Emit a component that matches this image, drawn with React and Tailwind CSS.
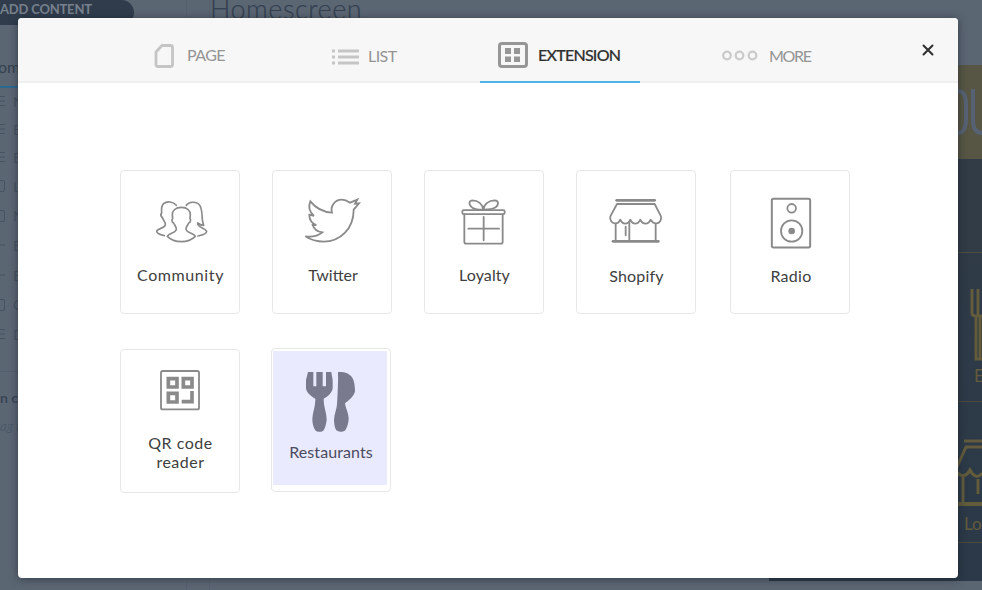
import React from "react";

const line = { fill: "none", stroke: "#8a8a8a", strokeWidth: 5.4, strokeLinejoin: "round", strokeLinecap: "round" };

function CommunityIcon() {
  return (
    <svg className="h-[70px] w-[60px]" viewBox="120 75 180 210" {...line} strokeWidth="5">
      <path d="M199 136C190 125 171 122 161 131C153 138 154 149 155 158C151 163 153 169 157 173C160 181 168 187 166 195C164 204 142 206 140 214C140 220 154 225 163 227" />
      <path d="M229 136C237 125 257 124 266 132C277 142 276 164 277 179C278 186 280 192 281 196C274 196 268 193 263 189C260 202 286 204 290 214C290 221 275 226 264 228" />
      <path d="M214 142C196 142 187 152 187 164L188 176C184 179 186 187 191 189C194 195 199 201 199 207C199 220 177 217 172 229C184 241 198 245 214 245C230 245 244 241 256 229C251 217 229 220 228 207C228 201 233 195 236 189C242 187 243 179 240 176L241 164C241 152 232 142 214 142Z" />
    </svg>
  );
}

function TwitterIcon() {
  return (
    <svg className="h-[70px] w-[60px]" viewBox="576 75 180 210" {...line}>
      <path strokeLinejoin="miter" d="M601 124C617 144 640 156 666 158C660 139 675 119 695 119C706 119 713 123 720 128L742 119L735 131L747 130L731 149C731 207 690 245 641 245C621 245 601 239 586 229C606 232 622 229 637 217C622 215 612 208 608 195L619 195C606 190 598 179 598 164L612 168C597 154 594 140 601 124Z" />
    </svg>
  );
}

function LoyaltyIcon() {
  return (
    <svg className="h-[70px] w-[60px]" viewBox="132 75 180 210" {...line}>
      <rect x="157" y="150.500" width="127" height="12" rx="4" />
      <path d="M163 163V246Q163 251 168 251H273Q278 251 278 246V163M221 171V241M175 206H267" />
      <path d="M220 149C222 132 237 121 254 121C268 122 266 135 257 142C247 149 231 149 220 149C218 132 204 121 187 121C174 122 177 137 187 143C196 149 209 149 220 149Z" />
    </svg>
  );
}

function ShopifyIcon() {
  return (
    <svg className="h-[70px] w-[60px]" viewBox="588 75 180 210" {...line}>
      <path strokeWidth="8" d="M620 121H734" />
      <path d="M621 132H734L753 169C755 180 749 190 739 190C730 191 725 184 722 179C718 187 714 191 707 191C699 191 694 186 691 179C687 187 682 191 676 191C669 191 664 186 661 179C657 187 652 191 646 191C639 191 634 186 631 179C628 186 623 191 615 190C605 190 599 181 601 169Z" />
      <path d="M617 192V242M737 192V242M658 186V242M647 200V226" />
      <path strokeWidth="8" d="M609 244H745" />
    </svg>
  );
}

function RadioIcon() {
  return (
    <svg className="h-[70px] w-[60px]" viewBox="120 75 180 210" {...line}>
      <rect x="155.500" y="116.500" width="115" height="146" rx="5" strokeWidth="6" />
      <circle cx="215" cy="145" r="13" />
      <circle cx="215" cy="213" r="32" />
      <circle cx="215" cy="213" r="10" fill="#8a8a8a" stroke="none" />
    </svg>
  );
}

function QrIcon() {
  return (
    <svg className="h-[70px] w-[60px]" viewBox="120 72 180 210" fill="none" stroke="#8a8a8a">
      <rect x="153" y="93" width="114" height="115" rx="5" strokeWidth="5.500" />
      <path strokeWidth="11" d="M175 116H201V141H175ZM220 116H246V141H220ZM175 160H201V186H175ZM246 153V185H215" />
    </svg>
  );
}

function RestaurantsIcon() {
  return (
    <svg className="ml-0.5 h-[70px] w-[60px]" viewBox="573 69 180 210" fill="#7a7a8f">
      <path d="M594 96H610V139H619V96H638V139H648V96H664L668 120V144C667 158 654 169 641 176C641 203 650 216 650 240C649 251 645 264 641 271C636 277 621 277 616 271C611 263 607 250 607 239C608 214 616 203 616 176C602 168 589 158 588 144V120Z" />
      <path d="M684 96C704 95 719 100 727 113C733 123 735 139 735 154C732 169 718 180 705 190C707 207 715 216 716 235C716 249 711 263 707 269C701 277 685 277 679 271C674 263 672 250 672 239C673 221 680 209 681 193C683 159 685 128 684 96Z" />
    </svg>
  );
}

function Card({ icon, label, className = "", labelClass = "mt-[10px]" }) {
  return (
    <div className={`h-36 w-[120px] shrink-0 rounded-[4px] border border-[#e7e7e7] bg-white ${className}`}>
      <div className="flex flex-col items-center pt-[14px]">
        {icon}
        <span className={`whitespace-pre text-center text-[16px] leading-[19px] text-[#404040] ${labelClass}`}>{label}</span>
      </div>
    </div>
  );
}

function ListGlyph() {
  return (
    <svg className="h-3 w-1.5 shrink-0" viewBox="0 0 6 12" stroke="#465363">
      <path d="M0 1.500H5M0 6H5M0 10.500H5" />
    </svg>
  );
}

function BoxGlyph() {
  return (
    <svg className="h-3 w-1.5 shrink-0" viewBox="0 0 6 12" fill="none" stroke="#465363">
      <path d="M0 .5H3Q4.500 .5 4.500 2V10Q4.500 11.500 3 11.500H0" />
    </svg>
  );
}

function DashGlyph() {
  return (
    <svg className="h-3 w-1.5 shrink-0" viewBox="0 0 6 12" stroke="#465363">
      <path d="M0 6H5" />
    </svg>
  );
}

const sidebarItems = [
  [ListGlyph, "N", "h-7"],
  [ListGlyph, "E", "h-7"],
  [ListGlyph, "E", "h-7"],
  [BoxGlyph, "L", "h-[30px]"],
  [BoxGlyph, "N", "h-[29px]"],
  [DashGlyph, "E", "h-[30px]"],
  [DashGlyph, "E", "h-[30px]"],
  [BoxGlyph, "C", "h-[29px]"],
  [ListGlyph, "D", "h-[30px]"],
];

function Sidebar() {
  return (
    <aside className="flex w-[187px] shrink-0 flex-col border-r border-[#566170]">
      <div className="h-[25px] w-[134px] rounded-r-[14px] bg-[#303c4c] pt-px text-[13px] font-bold leading-4 tracking-[-0.015em] text-[#77818d]">
        ADD CONTENT
      </div>
      <div className="mt-[26px] flex h-[37px] w-[120px] items-center border-b-2 border-[#2c6890] pb-1 text-[16px] text-[#35414f]">
        <span className="-ml-0.5">omescreen</span>
      </div>
      <div className="-mt-px text-[14px] text-[#465363]">
        {sidebarItems.map(([Glyph, letter, height], i) => (
          <div key={i} className={`flex items-center gap-[7px] ${height}`}>
            <Glyph />
            <span>{letter}</span>
          </div>
        ))}
      </div>
      <div className="mt-[22px] border-t border-[#536070] pt-4 text-[14px] font-bold leading-5 text-[#394555]">n content</div>
      <div className="mt-[9px] text-[13px] italic text-[#4c5968]">ag items</div>
    </aside>
  );
}

function PhonePreview() {
  return (
    <div className="flex w-[213px] shrink-0 flex-col items-end pb-[9px] pt-[65px]">
      <div className="flex h-[94px] w-full justify-end bg-[#575644] pt-[24px]">
        <svg className="h-12 w-6" viewBox="0 0 24 48" fill="none" stroke="#566273" strokeWidth="4">
          <path d="M0 2C6 2 8 8 8 15V29C8 38 6 44 0 44M15 0V31C15 40 18 44 24 44" />
        </svg>
      </div>
      <div className="flex w-full flex-1 flex-col items-end bg-gradient-to-b from-[#303b46] to-[#2b3948]">
        <div className="h-[94px] w-full border-b border-[#51503f] bg-[#313c46]" />
        <svg className="mt-[36px] h-[72px] w-6" viewBox="0 0 24 72" fill="none" stroke="#625b3c" strokeWidth="3">
          <path d="M14 0V24Q14 27 18 27H24M20 0V27M18 27V70H24M22 28V70" />
        </svg>
        <div className="w-[8px] pt-[5px] text-[17px] leading-5 text-[#625b3c]">E</div>
        <div className="mt-[15px] h-px w-full bg-[#4d4b3e]" />
        <svg className="mt-[37px] h-[68px] w-6" viewBox="0 0 24 68" fill="none" stroke="#625b3c" strokeWidth="3">
          <path d="M6 2H24M24 8H8L-2 30C0 38 8 39 12 31C15 37 20 40 24 34M5 37V64M20 40V55" />
          <path strokeWidth="4" d="M0 65H24" />
        </svg>
        <div className="w-[18px] pt-[5px] text-[17px] leading-6 text-[#625b3c]">Loyalty</div>
        <div className="mt-[6px] h-px w-full bg-[#4d4b3e]" />
      </div>
    </div>
  );
}

export default function App() {
  return (
    <div className="relative h-[590px] w-[982px] overflow-hidden bg-[#5b6673] font-[Lato,sans-serif]">
      <div className="flex h-full">
        <Sidebar />
        <main className="flex flex-1">
          <div className="w-[23px] shrink-0 border-r border-[#566170]" />
          <h1 className="-mt-[7px] text-[27px] font-light leading-8 tracking-[0.02em] text-[#344150] [-webkit-text-stroke:0.2px_#344150]">Homescreen</h1>
        </main>
        <PhonePreview />
      </div>

      <section className="absolute left-[18px] top-[18px] h-[560px] w-[940px] rounded-[4px] bg-white shadow-[0_1px_8px_rgba(20,28,38,0.55)]">
        <header className="flex h-[65px] rounded-t-[4px] border-b-2 border-[#efefef] bg-[#f7f7f7] text-[16px] text-[#949494]">
          <div className="ml-[136px] flex h-[65px] w-[178px] items-center gap-[12px] pt-[11px]">
            <svg className="h-6 w-[21px]" viewBox="0 0 21 24" fill="none" stroke="#c5c5c5" strokeWidth="2.800">
              <path d="M8 1.500H16.500Q18.500 1.500 18.500 3.500V20.500Q18.500 22.500 16.500 22.500H4Q2 22.500 2 20.500V8Z" strokeLinejoin="round" />
            </svg>
            <span className="-mt-0.5 tracking-[-0.035em]">PAGE</span>
          </div>
          <div className="flex h-[65px] w-[148px] items-center gap-[9px] pt-[12px]">
            <svg className="h-4 w-[27px]" viewBox="0 0 27 16" stroke="#c5c5c5" strokeWidth="3">
              <path d="M0 2H3M6 2H27M0 8H3M6 8H27M0 14H3M6 14H27" />
            </svg>
            <span className="-mt-0.5 tracking-[-0.035em]">LIST</span>
          </div>
          <div className="flex h-[65px] w-[160px] items-center gap-[9px] border-b-2 border-[#4db4e3] pl-[17px] pt-[11px] text-[#303030]">
            <svg className="h-[26px] w-8" viewBox="0 0 32 26" fill="none" stroke="#969696">
              <rect x="2.500" y="1.500" width="27" height="23" rx="2.500" strokeWidth="3" />
              <path fill="#969696" stroke="none" d="M8 6H14V12H8ZM17 6H23V12H17ZM8 14.500H14V20H8ZM17 14.500H23V20H17Z" />
            </svg>
            <span className="font-medium tracking-[-0.047em] [-webkit-text-stroke:0.2px_#303030]">EXTENSION</span>
          </div>
          <div className="ml-[81px] flex h-[65px] w-[181px] items-center gap-[11px] pt-[11px]">
            <svg className="h-3 w-[37px]" viewBox="0 0 37 12" fill="none" stroke="#cbcbcb" strokeWidth="2.300">
              <circle cx="6" cy="5.500" r="3.800" />
              <circle cx="18.500" cy="5.500" r="3.800" />
              <circle cx="31.500" cy="5.500" r="3.800" />
            </svg>
            <span className="tracking-[-0.080em]">MORE</span>
          </div>
          <button className="mt-[26px] h-3 w-3" aria-label="Close">
            <svg className="ml-[20px] h-3 w-3" viewBox="0 0 12 12" stroke="#303030" strokeWidth="2" strokeLinecap="round">
              <path d="M1.500 1.500L10.500 10.500M10.500 1.500L1.500 10.500" />
            </svg>
          </button>
        </header>

        <div className="flex gap-8 pl-[102px] pt-[87px]">
          <Card icon={<CommunityIcon />} label="Community" labelClass="mt-[10px] pl-px tracking-[0.6px]" />
          <Card icon={<TwitterIcon />} label="Twitter" labelClass="mt-[10px] pl-0.5" />
          <Card icon={<LoyaltyIcon />} label="Loyalty" labelClass="mt-[10px] pl-px tracking-[0.1px]" />
          <Card icon={<ShopifyIcon />} label="Shopify" labelClass="mt-[11px] pl-px tracking-[0.2px]" />
          <Card icon={<RadioIcon />} label="Radio" className="ml-0.5" labelClass="mt-[11px] pl-0.5 tracking-[0.3px]" />
        </div>
        <div className="flex items-start gap-[31px] pl-[102px] pt-[34px]">
          <Card icon={<QrIcon />} label={"QR code\nreader"} className="mt-px" labelClass="-mt-px pl-px tracking-[0.5px]" />
          <div className="h-36 w-[120px] rounded-[4px] border border-[#e7e7e7] pl-px pt-0.5">
            <div className="flex h-[134px] w-[114px] flex-col items-center bg-[#eaeafe] pt-3">
              <RestaurantsIcon />
              <span className="mt-[9px] pl-0.5 text-[16px] leading-[19px] tracking-[0.1px] text-[#4b4b60]">Restaurants</span>
            </div>
          </div>
        </div>
      </section>
    </div>
  );
}
